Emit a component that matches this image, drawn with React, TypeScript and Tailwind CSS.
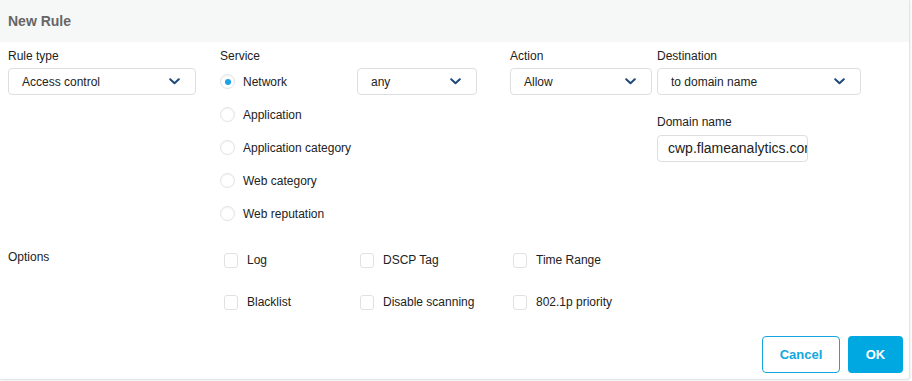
import { useState } from 'react';

const font = { fontFamily: '"Liberation Sans", Arial, sans-serif' };

function Chevron() {
  return (
    <svg width="11" height="7" viewBox="0 0 11 7" className="shrink-0">
      <polyline points="1.2,1.2 5.5,5.3 9.8,1.2" fill="none" stroke="#1d4a78" strokeWidth="2" strokeLinecap="round" strokeLinejoin="round" />
    </svg>
  );
}

function Select({ value, width }: { value: string; width: string }) {
  return (
    <div className={`${width} h-[27px] flex items-center justify-between pl-[13px] pr-[15px] border border-[#dcdfe2] rounded-[4px] bg-white text-[12px] text-[#222]`}>
      <span>{value}</span>
      <Chevron />
    </div>
  );
}

function Radio({ label, checked }: { label: string; checked?: boolean }) {
  return (
    <div className="h-[33px] flex items-center">
      <div className="w-[15px] h-[15px] rounded-full border border-[#dfe1e3] shadow-[inset_0_1px_1px_rgba(0,0,0,0.05)] flex items-center justify-center bg-white">
        {checked && <div className="w-[6px] h-[6px] rounded-full bg-[#1aa1e8]" />}
      </div>
      <span className="ml-[8px] text-[12px] text-[#222]">{label}</span>
    </div>
  );
}

function Check({ label, width }: { label: string; width: string }) {
  return (
    <div className={`${width} h-[42px] flex items-center`}>
      <div className="w-[14px] h-[15px] rounded-[3px] border border-[#dfe1e3] bg-white" />
      <span className="ml-[9px] text-[12px] text-[#222]">{label}</span>
    </div>
  );
}

export default function App() {
  const [service] = useState('Network');
  const services = ['Network', 'Application', 'Application category', 'Web category', 'Web reputation'];

  return (
    <div className="w-[912px] h-[381px] bg-white overflow-hidden" style={font}>
      <div className="w-[910px] h-[380px] bg-white border-r border-b border-[#e3e5e7] rounded-br-[4px] shadow-[1px_1px_2px_rgba(0,0,0,0.06)]">
        {/* Header */}
        <div className="h-[42px] bg-[#f6f7f7] flex items-center pl-[8px]">
          <h1 className="text-[14px] font-bold text-[#666]">New Rule</h1>
        </div>

        {/* Top fields */}
        <div className="flex pl-[8px] pt-[6px]">
          <div className="w-[212px]">
            <div className="h-[16px] leading-[16px] text-[12px] text-[#222]">Rule type</div>
            <div className="mt-[4px]">
              <Select value="Access control" width="w-[188px]" />
            </div>
          </div>

          <div className="w-[290px]">
            <div className="h-[16px] leading-[16px] text-[12px] text-[#222]">Service</div>
            <div className="flex mt-px">
              <div className="w-[137px]">
                {services.map((s) => (
                  <Radio key={s} label={s} checked={s === service} />
                ))}
              </div>
              <div className="mt-[3px]">
                <Select value="any" width="w-[120px]" />
              </div>
            </div>
          </div>

          <div className="w-[147px]">
            <div className="h-[16px] leading-[16px] text-[12px] text-[#222]">Action</div>
            <div className="mt-[4px]">
              <Select value="Allow" width="w-[142px]" />
            </div>
          </div>

          <div>
            <div className="h-[16px] leading-[16px] text-[12px] text-[#222]">Destination</div>
            <div className="mt-[4px]">
              <Select value="to domain name" width="w-[204px]" />
            </div>
            <div className="mt-[19px] h-[16px] leading-[16px] text-[12px] text-[#222]">Domain name</div>
            <div className="mt-[5px] w-[151px] h-[27px] flex items-center pl-[10px] border border-[#dcdfe2] rounded-[4px] overflow-hidden whitespace-nowrap text-[14px] text-[#222]">
              cwp.flameanalytics.com
            </div>
          </div>
        </div>

        {/* Options */}
        <div className="flex pl-[8px] mt-[9px]">
          <div className="w-[216px] pt-[10px] h-[16px] leading-[16px] text-[12px] text-[#222]">Options</div>
          <div className="grid grid-cols-[136px_153px_120px]">
            <Check label="Log" width="w-[136px]" />
            <Check label="DSCP Tag" width="w-[153px]" />
            <Check label="Time Range" width="w-[120px]" />
            <Check label="Blacklist" width="w-[136px]" />
            <Check label="Disable scanning" width="w-[153px]" />
            <Check label="802.1p priority" width="w-[120px]" />
          </div>
        </div>

        {/* Footer */}
        <div className="flex justify-end gap-[8px] pr-[6px] mt-[13px]">
          <button className="w-[78px] h-[37px] rounded-[4px] border border-[#12a7e0] bg-white text-[13px] font-bold text-[#12a7e0]">
            Cancel
          </button>
          <button className="w-[55px] h-[37px] rounded-[4px] bg-[#00a8e2] text-[13px] font-bold text-white">
            OK
          </button>
        </div>
      </div>
    </div>
  );
}
